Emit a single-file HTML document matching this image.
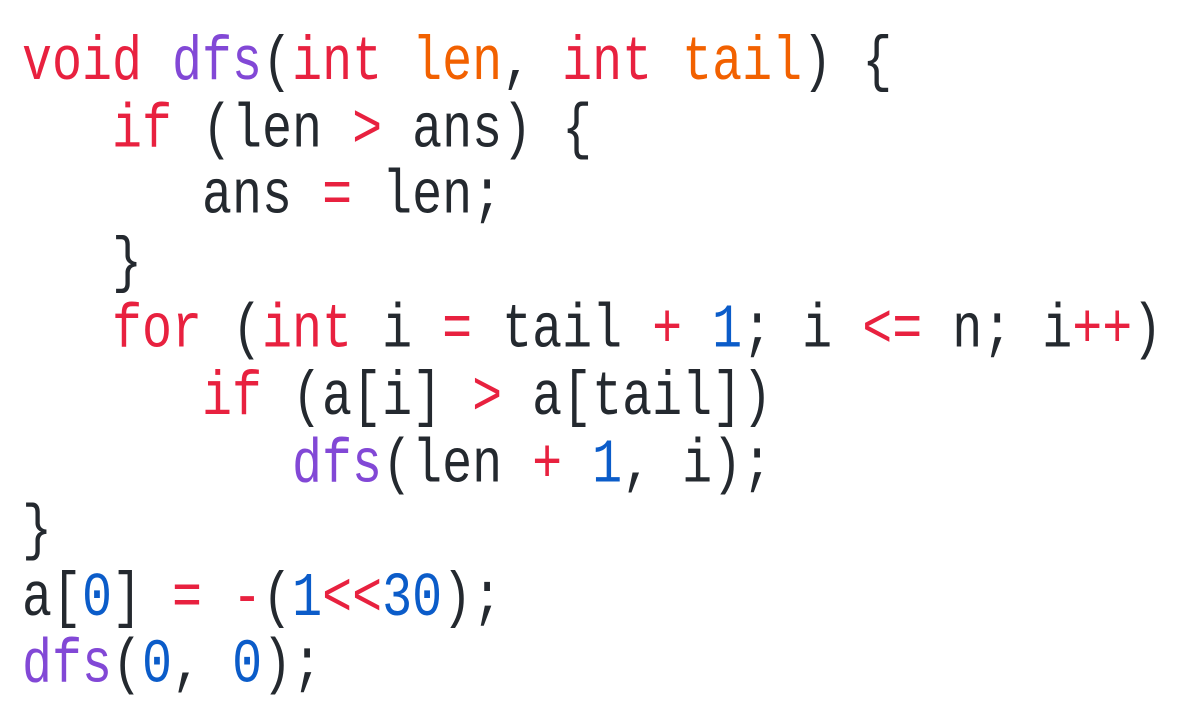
<!DOCTYPE html>
<html><head><meta charset="utf-8"><style>
html,body{margin:0;padding:0;background:#fff;width:1188px;height:720px;overflow:hidden}
pre{position:absolute;left:22px;top:30px;margin:0;font-family:"Liberation Mono",monospace;font-size:50px;line-height:53.6px;color:#24292f;transform:scale(1,1.25);transform-origin:0 0}
.k{color:#e8213f}.f{color:#8248d6}.o{color:#f26100}.n{color:#0b5cc9}
</style></head><body>
<pre><span class="k">void</span> <span class="f">dfs</span>(<span class="k">int</span> <span class="o">len</span>, <span class="k">int</span> <span class="o">tail</span>) {
   <span class="k">if</span> (len <span class="k">&gt;</span> ans) {
      ans <span class="k">=</span> len;
   }
   <span class="k">for</span> (<span class="k">int</span> i <span class="k">=</span> tail <span class="k">+</span> <span class="n">1</span>; i <span class="k">&lt;=</span> n; i<span class="k">++</span>)
      <span class="k">if</span> (a[i] <span class="k">&gt;</span> a[tail])
         <span class="f">dfs</span>(len <span class="k">+</span> <span class="n">1</span>, i);
}
a[<span class="n">0</span>] <span class="k">=</span> <span class="k">-</span>(<span class="n">1</span><span class="k">&lt;&lt;</span><span class="n">30</span>);
<span class="f">dfs</span>(<span class="n">0</span>, <span class="n">0</span>);</pre>
</body></html>
